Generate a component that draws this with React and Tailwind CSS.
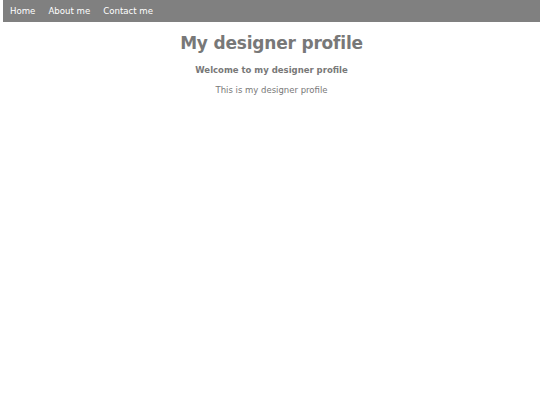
import React from 'react';

const links = ['Home', 'About me', 'Contact me'];

const App = () => {
  return (
    <div className="min-h-screen bg-white font-['DejaVu_Sans',sans-serif] pl-[3px]">
      <nav className="flex h-[22px] items-center gap-[13px] bg-[#808080] px-[7px]">
        {links.map((link) => (
          <a key={link} href="#" className="text-[8.6px] leading-[12px] text-white">
            {link}
          </a>
        ))}
      </nav>
      <main className="text-center text-[#787878]">
        <h1 className="mt-[10px] text-[17px] font-bold leading-[22px] tracking-[-0.2px]">My designer profile</h1>
        <h2 className="mt-[10px] text-[8.5px] font-bold leading-[12px]">Welcome to my designer profile</h2>
        <p className="mt-[8px] text-[8.5px] leading-[12px]">This is my designer profile</p>
      </main>
    </div>
  );
};

export default App;
